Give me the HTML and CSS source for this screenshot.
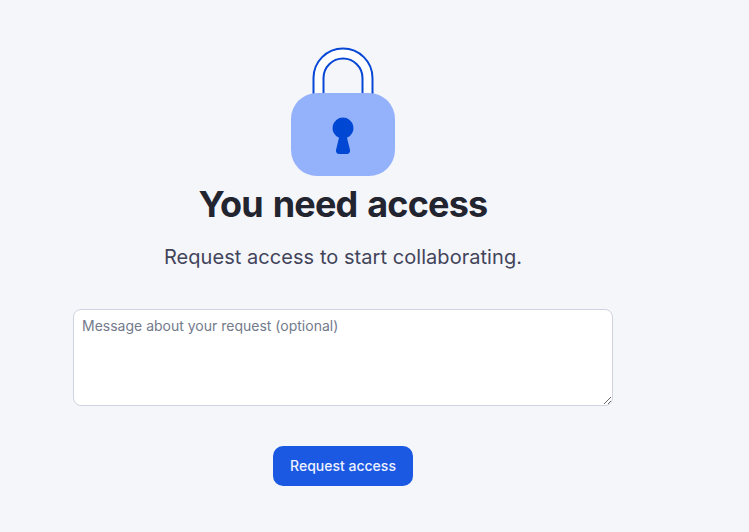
FILE: index.html
```html
<!DOCTYPE html>
<html lang="en">
<head>
<meta charset="utf-8">
<title>You need access</title>
<link rel="stylesheet" href="styles.css">
</head>
<body>
<main class="panel">
  <svg class="lock" width="104" height="129" viewBox="0 0 104 129" aria-hidden="true">
    <path d="M22.500 47V31a29.500 29.500 0 0 1 59 0V47H71V31a19 19 0 0 0-38 0V47Z" fill="#fff"/>
    <path d="M22.500 47V31a29.500 29.500 0 0 1 59 0V47M32.500 47V31a19.500 19.500 0 0 1 39 0V47" fill="none" stroke="#0747d6" stroke-width="2"/>
    <rect x="0" y="46" width="104" height="83" rx="26" fill="#94b1fb"/>
    <path d="M52 70.500a10.500 10.500 0 0 1 4 20.200l3 12.300c.5 2-1 4-3 4h-8c-2 0-3.500-2-3-4l3-12.300A10.500 10.500 0 0 1 52 70.500Z" fill="#0048d4"/>
  </svg>
  <h1 class="title">You need access</h1>
  <p class="subtitle">Request access to start collaborating.</p>
  <textarea class="message" placeholder="Message about your request (optional)"></textarea>
  <button class="submit" type="button">Request access</button>
</main>
</body>
</html>
```
FILE: styles.css
```css
html, body {
  margin: 0;
  height: 100%;
}
body {
  background: #f5f6fa;
  font-family: Inter, "Liberation Sans", sans-serif;
  overflow: hidden;
}
.panel {
  width: 540px;
  margin-left: 73px;
  padding-top: 47px;
  display: flex;
  flex-direction: column;
  align-items: center;
}
.lock {
  display: block;
}
.title {
  margin: 5px 0 0;
  font-size: 36px;
  line-height: 46px;
  font-weight: 700;
  letter-spacing: -0.8px;
  word-spacing: 2px;
  color: #22242f;
}
.subtitle {
  margin: 16px 0 0;
  font-size: 20px;
  line-height: 28px;
  font-weight: 400;
  letter-spacing: 0.05px;
  color: #42445a;
}
.message {
  box-sizing: border-box;
  display: block;
  width: 540px;
  height: 97px;
  margin-top: 38px;
  padding: 7px 8px;
  background: #fff;
  border: 1px solid #d0d3e0;
  border-radius: 8px;
  font-family: inherit;
  font-size: 14px;
  line-height: 18px;
  color: #22242f;
  outline: none;
}
.message::placeholder {
  color: #737a8c;
  opacity: 1;
}
.submit {
  width: 140px;
  height: 40px;
  margin-top: 40px;
  padding: 0 0 2px;
  border: 0;
  border-radius: 10px;
  background: #1b59e2;
  color: #eef2ff;
  font-family: inherit;
  font-size: 14px;
  font-weight: 500;
}
```
